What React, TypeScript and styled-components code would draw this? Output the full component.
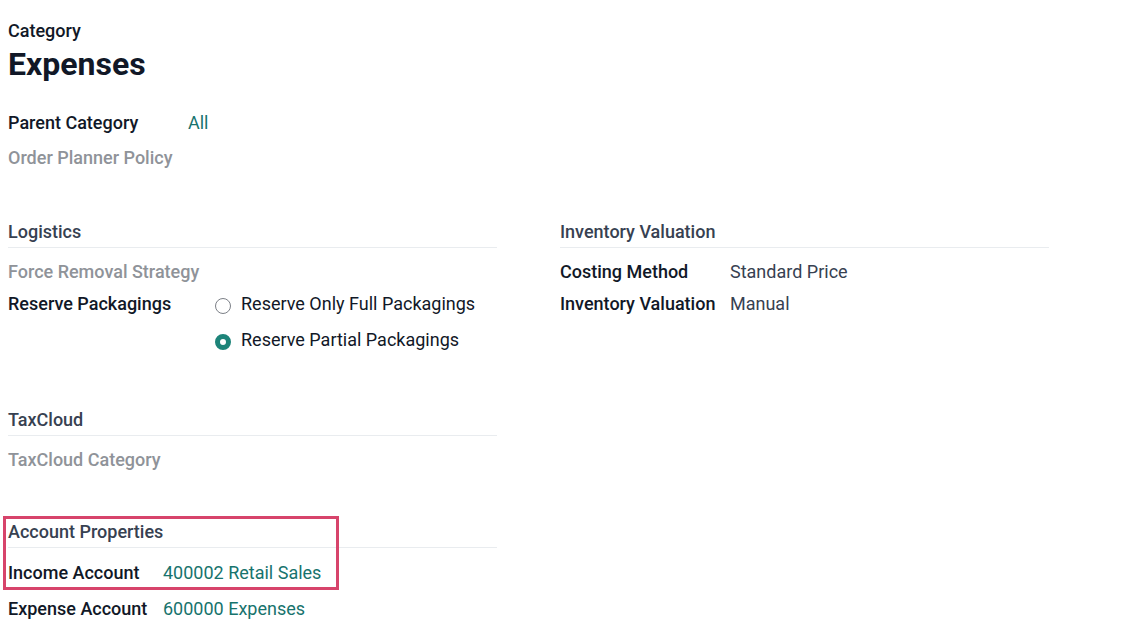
import React from "react";
import styled, { createGlobalStyle } from "styled-components";

const Global = createGlobalStyle`
  html, body { margin: 0; padding: 0; background: #ffffff; }
  body { font-family: Roboto, "Noto Sans", "Liberation Sans", sans-serif; color: #111827; -webkit-font-smoothing: antialiased; }
`;

const Page = styled.div`
  padding: 19px 8px 0 8px;
  width: 1041px;
`;

const Kicker = styled.div`
  font-size: 18px;
  line-height: 24px;
  font-weight: 500;
  color: #111827;
`;

const Title = styled.h1`
  margin: 2px 0 0 0;
  font-size: 32px;
  line-height: 38px;
  font-weight: 700;
  color: #111827;
`;

const Columns = styled.div<{ $mt: number }>`
  display: grid;
  grid-template-columns: 489px 489px;
  column-gap: 63px;
  margin-top: ${(p) => p.$mt}px;
`;

const Section = styled.section<{ $mt?: number }>`
  position: relative;
  margin-top: ${(p) => p.$mt ?? 0}px;
  width: 489px;
`;

const Header = styled.div`
  font-size: 18px;
  line-height: 24px;
  font-weight: 500;
  color: #374151;
  padding-bottom: 3px;
  border-bottom: 1px solid #e9ecef;
`;

const Table = styled.div<{ $lw: number; $gap: number; $mt: number }>`
  display: grid;
  grid-template-columns: ${(p) => p.$lw}px 1fr;
  row-gap: ${(p) => p.$gap}px;
  margin-top: ${(p) => p.$mt}px;
  align-items: start;
  width: 489px;
`;

const Label = styled.div<{ $muted?: boolean; $span?: boolean }>`
  font-size: 18px;
  line-height: 24px;
  font-weight: 500;
  color: ${(p) => (p.$muted ? "#8f9399" : "#111827")};
  white-space: nowrap;
  grid-column: ${(p) => (p.$span ? "1 / span 2" : "auto")};
`;

const Value = styled.div`
  font-size: 18px;
  line-height: 24px;
  font-weight: 400;
  color: #374151;
  white-space: nowrap;
`;

const Link = styled.a`
  font-size: 18px;
  line-height: 24px;
  font-weight: 400;
  color: #17736d;
  text-decoration: none;
  white-space: nowrap;
`;

const RadioList = styled.div`
  display: flex;
  flex-direction: column;
  gap: 12px;
`;

const RadioRow = styled.label`
  display: flex;
  align-items: center;
  gap: 10px;
  font-size: 18px;
  line-height: 24px;
  color: #111827;
  white-space: nowrap;
`;

const RadioDot = styled.span<{ $checked?: boolean }>`
  box-sizing: border-box;
  width: 16px;
  height: 16px;
  margin-top: 4px;
  border-radius: 50%;
  flex: none;
  border: ${(p) => (p.$checked ? "5px solid #1d8479" : "1.7px solid #7c8087")};
  background: #ffffff;
`;

const Highlight = styled.div`
  position: absolute;
  left: -5px;
  top: -4px;
  width: 336px;
  height: 74px;
  box-sizing: border-box;
  border: 3px solid #d7446b;
  pointer-events: none;
`;

export default function App() {
  return (
    <>
      <Global />
      <Page>
        <Kicker>Category</Kicker>
        <Title>Expenses</Title>

        <Table $lw={180} $gap={11} $mt={28}>
          <Label>Parent Category</Label>
          <Link href="#">All</Link>
          <Label $muted $span>Order Planner Policy</Label>
        </Table>

        <Columns $mt={50}>
          <Section>
            <Header>Logistics</Header>
            <Table $lw={207} $gap={8} $mt={12}>
              <Label $muted $span>Force Removal Strategy</Label>
              <Label>Reserve Packagings</Label>
              <RadioList>
                <RadioRow>
                  <RadioDot />
                  Reserve Only Full Packagings
                </RadioRow>
                <RadioRow>
                  <RadioDot $checked />
                  Reserve Partial Packagings
                </RadioRow>
              </RadioList>
            </Table>
          </Section>
          <Section>
            <Header>Inventory Valuation</Header>
            <Table $lw={170} $gap={8} $mt={12}>
              <Label>Costing Method</Label>
              <Value>Standard Price</Value>
              <Label>Inventory Valuation</Label>
              <Value>Manual</Value>
            </Table>
          </Section>
        </Columns>

        <Section $mt={56}>
          <Header>TaxCloud</Header>
          <Table $lw={180} $gap={8} $mt={12}>
            <Label $muted $span>TaxCloud Category</Label>
          </Table>
        </Section>

        <Section $mt={48}>
          <Header>Account Properties</Header>
          <Table $lw={155} $gap={12} $mt={13}>
            <Label>Income Account</Label>
            <Link href="#">400002 Retail Sales</Link>
            <Label>Expense Account</Label>
            <Link href="#">600000 Expenses</Link>
          </Table>
          <Highlight />
        </Section>
      </Page>
    </>
  );
}
